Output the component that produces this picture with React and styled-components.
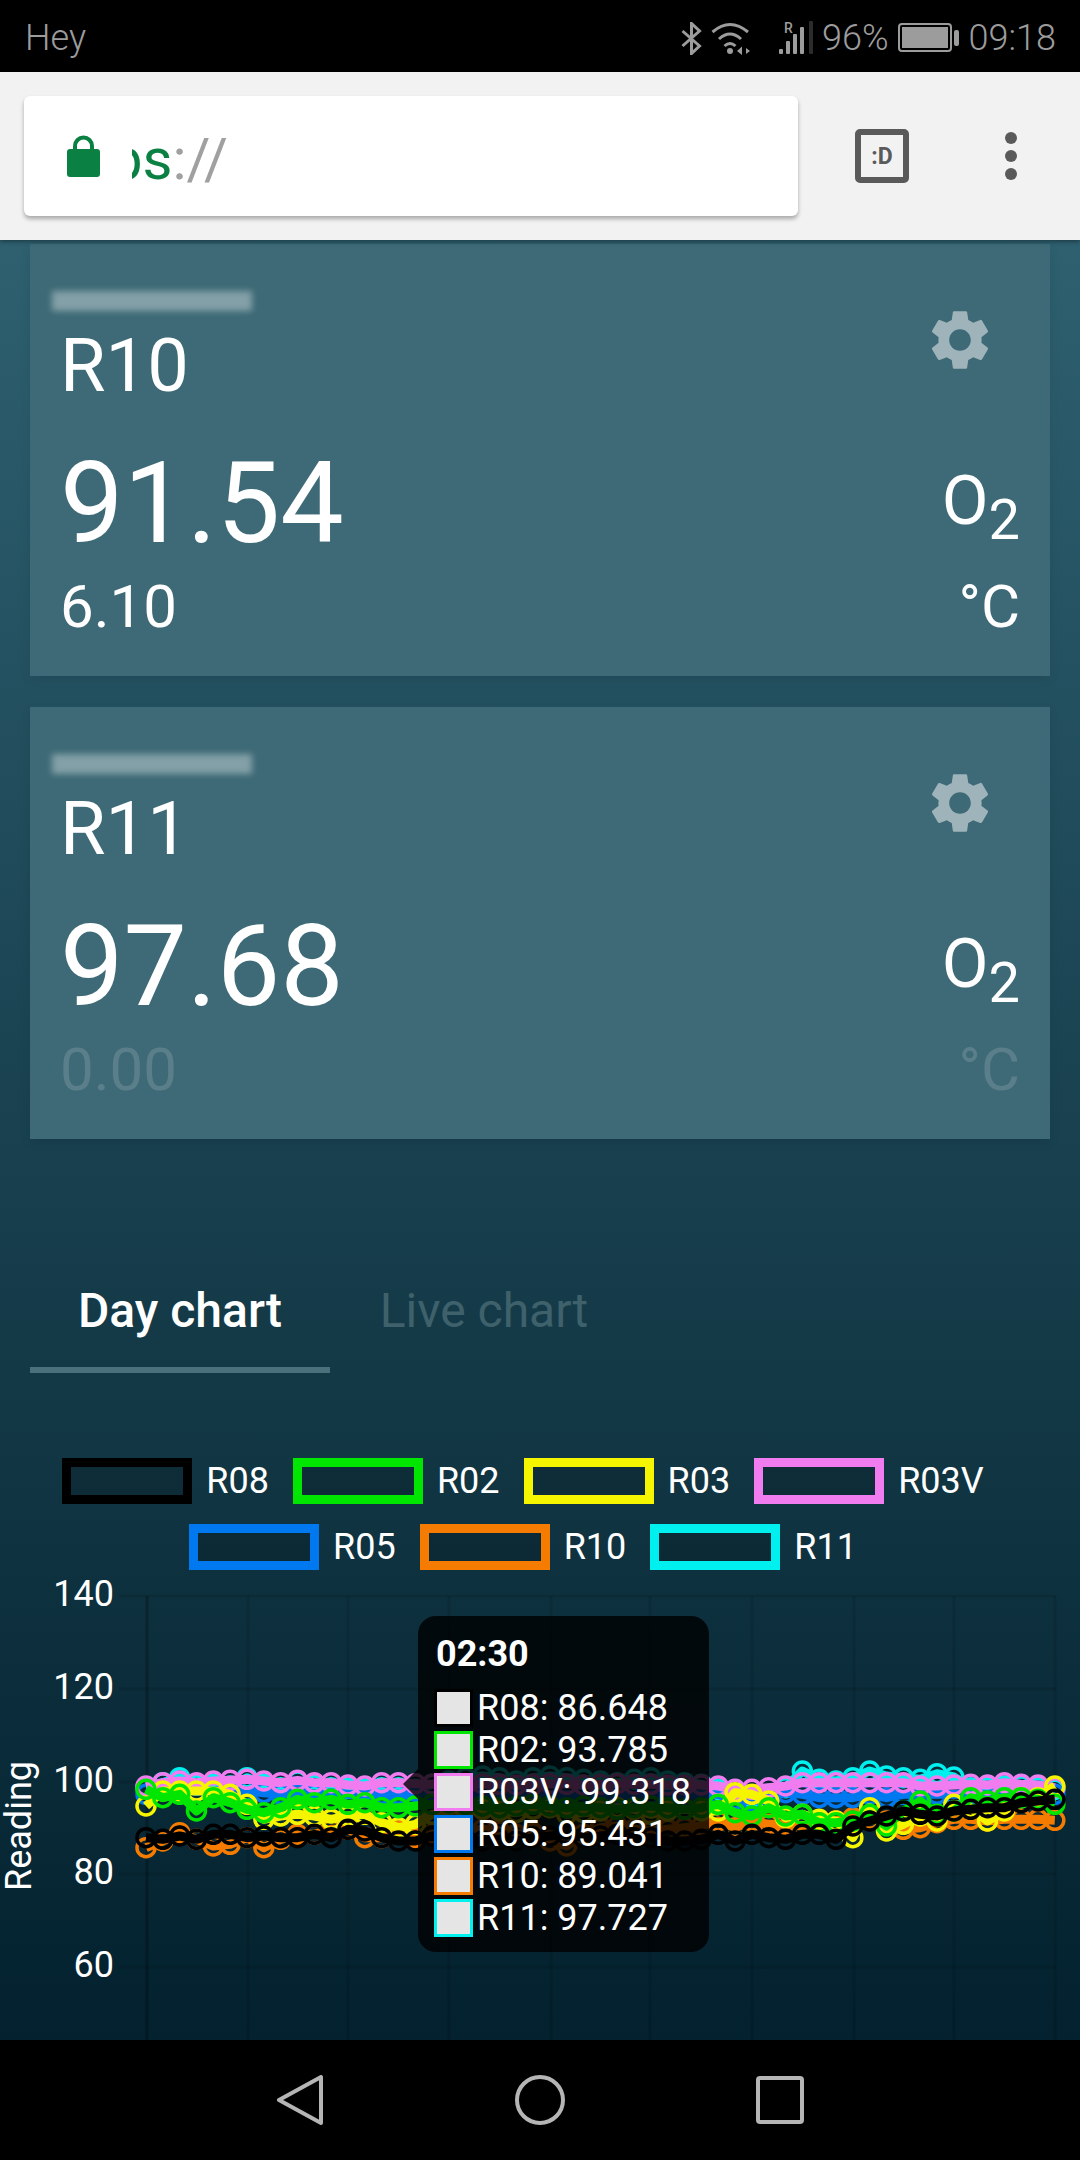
import React from 'react'
import styled, { createGlobalStyle } from 'styled-components'
import { MdSettings } from 'react-icons/md'

const GlobalStyle = createGlobalStyle`
  html, body {
    margin: 0;
    padding: 0;
    background: #000;
  }
  body {
    font-family: Roboto, "Liberation Sans", sans-serif;
  }
`

const Screen = styled.div`
  width: 1080px;
  height: 2160px;
  display: flex;
  flex-direction: column;
  overflow: hidden;
`

const StatusBar = styled.div`
  height: 72px;
  flex: none;
  background: #000;
  color: #9c9c9c;
  display: flex;
  align-items: center;
  justify-content: space-between;
  padding: 4px 24px 0 25px;
  box-sizing: border-box;
  font-size: 36px;
  font-weight: 300;
`

const StatusIcons = styled.div`
  display: flex;
  align-items: center;
  gap: 9px;
`

const Toolbar = styled.div`
  height: 168px;
  flex: none;
  background: #f2f2f2;
  display: flex;
  align-items: flex-start;
  padding: 24px 0 0 24px;
  box-sizing: border-box;
  position: relative;
  z-index: 2;
  box-shadow: 0 2px 4px rgba(0, 0, 0, .35);
`

const Omnibox = styled.div`
  width: 774px;
  height: 120px;
  background: #fff;
  border-radius: 6px;
  box-shadow: 0 3px 4px rgba(0, 0, 0, .3);
  display: flex;
  align-items: center;
  padding-left: 43px;
  box-sizing: border-box;
`

const Url = styled.div`
  width: 96px;
  margin-left: 32px;
  margin-top: 5px;
  overflow: hidden;
  display: flex;
  justify-content: flex-end;
  font-size: 58px;
  white-space: nowrap;
  color: #a0a0a0;
`

const Scheme = styled.span`
  color: #0b8043;
`

const TabCount = styled.div`
  width: 54px;
  height: 54px;
  margin: 33px 0 0 57px;
  box-sizing: border-box;
  border: 6px solid #5a5a5a;
  border-radius: 5px;
  color: #5a5a5a;
  font-size: 23px;
  font-weight: 700;
  display: flex;
  align-items: center;
  justify-content: center;
`

const MenuDots = styled.div`
  margin: 36px 0 0 96px;
  display: flex;
  flex-direction: column;
  gap: 6px;
`

const Dot = styled.span`
  width: 12px;
  height: 12px;
  border-radius: 50%;
  background: #5a5a5a;
`

const Page = styled.div`
  flex: 1;
  min-height: 0;
  display: flex;
  flex-direction: column;
  background: linear-gradient(#2e6070, #03212e);
`

const Cards = styled.div`
  padding: 4px 30px 0;
  display: flex;
  flex-direction: column;
  gap: 31px;
`

const Card = styled.div`
  height: 432px;
  box-sizing: border-box;
  padding: 44px 30px 0 30px;
  background: #3d6a76;
  box-shadow: 0 4px 10px rgba(0, 0, 0, .08);
  color: #fff;
`

const CardHead = styled.div`
  display: flex;
  justify-content: space-between;
  align-items: flex-start;
`

const Location = styled.div`
  width: 200px;
  height: 20px;
  margin: 3px 0 19px -8px;
  background: rgba(255, 255, 255, .36);
  filter: blur(3px);
`

const Title = styled.div`
  font-size: 74px;
  line-height: 72px;
`

const Gear = styled.div`
  margin: 16px 24px 0 0;
  color: #9fb4ba;
  font-size: 72px;
  line-height: 0;
`

const Row = styled.div`
  display: flex;
  justify-content: space-between;
  align-items: center;
`

const Reading = styled.div`
  margin-top: 44px;
  font-size: 113px;
  line-height: 116px;
`

const Oxygen = styled.div`
  margin-top: 38px;
  font-size: 68px;
  line-height: 66px;
`

const Subscript = styled.span`
  font-size: 56px;
  line-height: 0;
  vertical-align: -15px;
`

const Small = styled.div`
  margin-top: 15px;
  font-size: 60px;
  line-height: 60px;
  color: ${({ dim }) => (dim ? '#5b7f8a' : '#fff')};
`

const Tabs = styled.div`
  margin: 112px 0 0 30px;
  display: flex;
`

const Tab = styled.div`
  width: ${({ wide }) => (wide ? 308 : 300)}px;
  height: 122px;
  box-sizing: border-box;
  padding-top: 38px;
  text-align: center;
  font-size: 48px;
  line-height: 44px;
  font-weight: ${({ active }) => (active ? 500 : 400)};
  color: ${({ active }) => (active ? '#fff' : '#3f616c')};
  border-bottom: 6px solid ${({ active }) => (active ? '#4a717b' : 'transparent')};
`

const Legend = styled.div`
  margin-top: 85px;
  padding: 0 64px 0 30px;
  display: flex;
  flex-wrap: wrap;
  justify-content: center;
  gap: 20px 24px;
`

const LegendItem = styled.div`
  display: flex;
  align-items: center;
  gap: 14px;
  height: 46px;
  color: #fff;
  font-size: 36px;
`

const LegendBox = styled.span`
  width: 130px;
  height: 46px;
  box-sizing: border-box;
  border: 9px solid ${({ color }) => color};
  background: rgba(0, 0, 0, .15);
`

const Chart = styled.div`
  position: relative;
  margin-top: 6px;
  flex: 1;
  min-height: 0;
  overflow: hidden;

  svg {
    display: block;
  }
`

const AxisLabel = styled.text`
  fill: #fff;
  font-family: Roboto, sans-serif;
  font-size: 36px;
`

const Tooltip = styled.div`
  position: absolute;
  left: 418px;
  top: 40px;
  width: 291px;
  height: 336px;
  box-sizing: border-box;
  padding: 18px 16px 0;
  background: rgba(0, 0, 0, .8);
  border-radius: 18px;
  color: #fff;
  font-size: 36px;

  &::before {
    content: '';
    position: absolute;
    right: 100%;
    top: 153px;
    border: 15px solid transparent;
    border-left-width: 0;
    border-right-color: rgba(0, 0, 0, .8);
  }
`

const TooltipTitle = styled.div`
  height: 40px;
  line-height: 40px;
  margin: 0 0 13px 2px;
  font-weight: 700;
`

const TooltipRow = styled.div`
  height: 42px;
  display: flex;
  align-items: center;
  gap: 4px;
  white-space: nowrap;
`

const Swatch = styled.span`
  width: 39px;
  height: 38px;
  flex: none;
  box-sizing: border-box;
  border: 3px solid ${({ color }) => color};
  background: #e5e5e5;
`

const NavBar = styled.div`
  height: 120px;
  flex: none;
  background: #000;
  display: grid;
  grid-template-columns: repeat(3, 240px);
  justify-content: center;
  justify-items: center;
  align-items: center;
`

// traces are in thirds of a pixel below the top of the plot area
const series = [
  {
    name: 'R08', color: '#000000', tip: '86.648',
    trace: [770, 775, 765, 775, 760, 760, 770, 765, 770, 770, 760, 770, 745, 750, 770, 780, 780,
      765, 770, 775, 780, 775, 780, 770, 765, 760, 770, 765, 760, 770, 770, 780, 780, 775,
      760, 780, 760, 770, 775, 760, 760, 775, 735, 720, 705, 690, 700, 705, 690, 685, 680, 680, 665, 660, 655],
  },
  {
    name: 'R02', color: '#00e600', tip: '93.785',
    trace: [625, 650, 640, 690, 650, 665, 685, 695, 680, 655, 665, 655, 670, 665, 680, 680, 675,
      670, 665, 670, 675, 680, 675, 670, 675, 680, 675, 680, 685, 680, 675, 680, 685, 680,
      670, 695, 705, 680, 705, 700, 725, 725, 720, 700, 735, 690, 660, 700, 690, 650, 660, 650, 650, 655, 670],
  },
  {
    name: 'R03', color: '#f5f500',
    trace: [675, 630, 630, 630, 630, 640, 670, 715, 705, 700, 705, 715, 705, 700, 725, 740, 730,
      700, 690, 680, 685, 690, 695, 685, 680, 700, 695, 690, 680, 685, 700, 690, 685, 690,
      690, 635, 640, 660, 710, 700, 715, 720, 770, 680, 750, 730, 705, 720, 670, 680, 720, 690, 650, 650, 615],
  },
  {
    name: 'R03V', color: '#f07cf0', tip: '99.318',
    trace: [615, 605, 600, 605, 600, 598, 595, 600, 605, 598, 605, 605, 612, 615, 605, 605, 608,
      610, 612, 610, 608, 610, 612, 610, 608, 610, 612, 610, 608, 610, 610, 612, 612, 612,
      615, 625, 625, 620, 615, 605, 605, 605, 605, 605, 605, 605, 615, 615, 612, 610, 612, 605, 610, 612, 620],
  },
  {
    name: 'R05', color: '#0078f0', tip: '95.431',
    trace: [640, 625, 625, 630, 630, 630, 630, 635, 640, 640, 640, 635, 640, 640, 640, 640, 650,
      645, 640, 640, 645, 640, 640, 645, 640, 640, 645, 640, 640, 645, 640, 640, 640, 640,
      640, 655, 660, 650, 635, 640, 650, 650, 650, 640, 650, 640, 640, 640, 640, 640, 640, 635, 630, 630, 640],
  },
  {
    name: 'R10', color: '#f57c00', tip: '89.041',
    trace: [800, 780, 755, 775, 795, 790, 770, 800, 775, 760, 760, 745, 745, 770, 770, 750, 770,
      760, 755, 750, 745, 750, 760, 755, 780, 795, 760, 740, 735, 745, 750, 745, 740, 735,
      720, 740, 720, 730, 730, 735, 720, 720, 710, 715, 720, 745, 740, 725, 715, 715, 720, 715, 715, 715, 718],
  },
  {
    name: 'R11', color: '#00f0f0', tip: '97.727',
    trace: [620, 605, 590, 612, 610, 615, 590, 610, 620, 600, 612, 620, 622, 625, 620, 620, 625,
      610, 600, 590, 585, 590, 600, 590, 585, 590, 595, 600, 605, 595, 590, 600, 605, 610,
      625, 640, 650, 640, 620, 570, 595, 600, 590, 570, 585, 590, 595, 578, 588, 620, 620, 615, 615, 620, 625],
  },
]

const legendOrder = ['R08', 'R02', 'R03', 'R03V', 'R05', 'R10', 'R11']
const drawOrder = ['R11', 'R10', 'R05', 'R03V', 'R03', 'R02', 'R08']
const tooltipOrder = ['R08', 'R02', 'R03V', 'R05', 'R10', 'R11']
const byName = (name) => series.find((s) => s.name === name)

const gridX = [147, 248, 348, 449, 551, 650, 752, 854, 954, 1055]
const gridY = [20, 113, 206, 298, 391]
const axisLabels = ['140', '120', '100', '80', '60']

const pointX = (i) => 146 + i * 16.83
const pointY = (v) => 5 + v / 3

const BluetoothIcon = () => (
  <svg width="21" height="33" viewBox="0 0 21 33" fill="none" stroke="#9c9c9c" strokeWidth="3">
    <path d="M1.5 9 L18.5 24 L10.5 31.5 V1.5 L18.5 9 L1.5 24" />
  </svg>
)

const WifiIcon = () => (
  <svg width="39" height="34" viewBox="0 0 39 34" fill="none" stroke="#9c9c9c" strokeWidth="3">
    <path d="M1.5 11 Q19 -4 37 11" />
    <path d="M8 18 Q19 8 30 18" />
    <path d="M13.5 25 Q19 20 24.5 25" />
    <circle cx="19" cy="30" r="3" fill="#9c9c9c" stroke="none" />
    <path d="M26 30 L31 25.5 V34 Z M33 25 V34 M35 27 L39 30 L35 33 Z" fill="#9c9c9c" stroke="none" />
  </svg>
)

const SignalIcon = () => (
  <svg width="54" height="36" viewBox="0 0 54 36">
    <text x="25" y="13" fontFamily="Roboto, sans-serif" fontSize="14" fontWeight="500" fill="#9c9c9c">R</text>
    <g fill="#9c9c9c">
      <rect x="20" y="29" width="4" height="5" rx="1" />
      <rect x="27" y="21" width="4" height="13" rx="1" />
      <rect x="34" y="14" width="4" height="20" rx="1" />
      <rect x="41" y="7" width="4" height="27" rx="1" />
    </g>
    <rect x="50" y="1" width="4" height="33" rx="1" fill="#2c2c2c" />
  </svg>
)

const BatteryIcon = () => (
  <svg width="62" height="30" viewBox="0 0 62 30">
    <rect x="1" y="1" width="52" height="27" rx="3" fill="none" stroke="#9c9c9c" strokeWidth="2" />
    <rect x="4" y="4" width="46" height="21" fill="#9c9c9c" />
    <rect x="56" y="7" width="5" height="16" rx="2" fill="#9c9c9c" />
  </svg>
)

const LockIcon = () => (
  <svg width="33" height="42" viewBox="0 0 33 42">
    <path d="M8 16 V11 a8.5 8.5 0 0 1 17 0 V16" fill="none" stroke="#0b8043" strokeWidth="4" />
    <rect x="0" y="14" width="33" height="28" rx="3" fill="#0b8043" />
  </svg>
)

const NavIcon = ({ children }) => (
  <svg width="50" height="50" viewBox="0 0 50 50" fill="none" stroke="#b5b5b5" strokeWidth="4" strokeLinejoin="round">
    {children}
  </svg>
)

const SensorCard = ({ name, reading, temperature, dim }) => (
  <Card>
    <CardHead>
      <div>
        <Location />
        <Title>{name}</Title>
      </div>
      <Gear><MdSettings /></Gear>
    </CardHead>
    <Row>
      <Reading>{reading}</Reading>
      <Oxygen>O<Subscript>2</Subscript></Oxygen>
    </Row>
    <Row>
      <Small dim={dim}>{temperature}</Small>
      <Small dim={dim}>°C</Small>
    </Row>
  </Card>
)

const Plot = () => (
  <svg width="1080" height="465" viewBox="0 0 1080 465">
    {gridY.map((y) => (
      <line key={y} x1="119" x2="1056" y1={y} y2={y} stroke="rgba(0,0,0,.1)" strokeWidth="3" />
    ))}
    {gridX.map((x, i) => (
      <line key={x} x1={x} x2={x} y1="20" y2="465" stroke={i === 0 ? 'rgba(0,0,0,.25)' : 'rgba(0,0,0,.1)'} strokeWidth="3" />
    ))}
    {axisLabels.map((label, i) => (
      <AxisLabel key={label} x="114" y={gridY[i] + 10} textAnchor="end">{label}</AxisLabel>
    ))}
    <AxisLabel transform="translate(31 250) rotate(-90)" textAnchor="middle">Reading</AxisLabel>
    {drawOrder.map((name) => {
      const { color, trace } = byName(name)
      const points = trace.map((v, i) => `${pointX(i)},${pointY(v)}`).join(' ')
      return (
        <g key={name} fill="none" stroke={color}>
          <polyline points={points} strokeWidth="9" strokeLinejoin="round" />
          {trace.map((v, i) => (
            <circle key={i} cx={pointX(i)} cy={pointY(v)} r="9" strokeWidth="3.5" />
          ))}
        </g>
      )
    })}
  </svg>
)

export default function App() {
  return (
    <Screen>
      <GlobalStyle />
      <StatusBar>
        <span>Hey</span>
        <StatusIcons>
          <BluetoothIcon />
          <WifiIcon />
          <SignalIcon />
          <span>96%</span>
          <BatteryIcon />
          <span>09:18</span>
        </StatusIcons>
      </StatusBar>
      <Toolbar>
        <Omnibox>
          <LockIcon />
          <Url><Scheme>https</Scheme>://</Url>
        </Omnibox>
        <TabCount>:D</TabCount>
        <MenuDots><Dot /><Dot /><Dot /></MenuDots>
      </Toolbar>
      <Page>
        <Cards>
          <SensorCard name="R10" reading="91.54" temperature="6.10" />
          <SensorCard name="R11" reading="97.68" temperature="0.00" dim />
        </Cards>
        <Tabs>
          <Tab active>Day chart</Tab>
          <Tab wide>Live chart</Tab>
        </Tabs>
        <Legend>
          {legendOrder.map((name) => (
            <LegendItem key={name}>
              <LegendBox color={byName(name).color} />
              {name}
            </LegendItem>
          ))}
        </Legend>
        <Chart>
          <Plot />
          <Tooltip>
            <TooltipTitle>02:30</TooltipTitle>
            {tooltipOrder.map((name) => (
              <TooltipRow key={name}>
                <Swatch color={byName(name).color} />
                {name}: {byName(name).tip}
              </TooltipRow>
            ))}
          </Tooltip>
        </Chart>
      </Page>
      <NavBar>
        <NavIcon><path d="M46 2 V48 L4 25 Z" /></NavIcon>
        <NavIcon><circle cx="25" cy="25" r="23" /></NavIcon>
        <NavIcon><rect x="3" y="3" width="44" height="44" rx="2" /></NavIcon>
      </NavBar>
    </Screen>
  )
}
